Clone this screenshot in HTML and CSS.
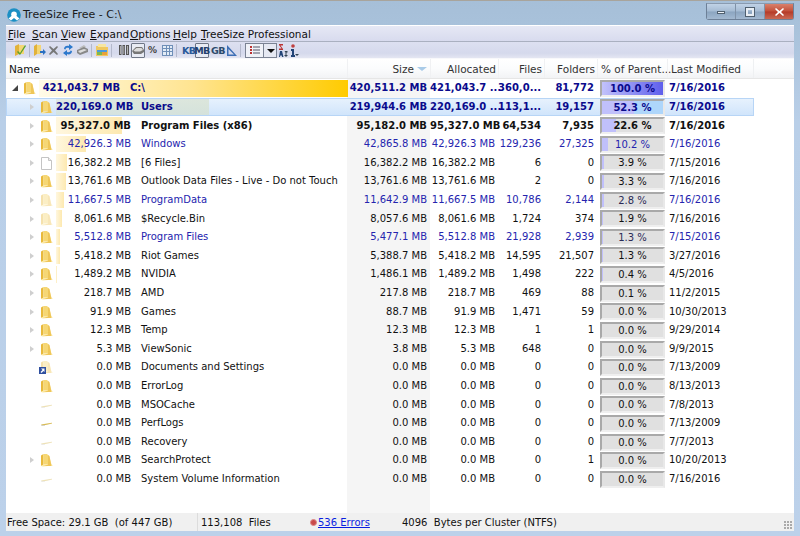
FILE: index.html
```html
<!DOCTYPE html>
<html lang="en">
<head>
<meta charset="utf-8">
<title>TreeSize Free - C:\</title>
<link rel="stylesheet" href="styles.css">
</head>
<body>
<svg class="defs" width="0" height="0" aria-hidden="true">
  <symbol id="folder" viewBox="0 0 13 14">
    <path d="M1 2.5 3.5 1v10.5L1 13z" fill="#e8b93c"/>
    <path d="M3.5 1h3.5l1 1v9.5H3.5z" fill="#f6d774"/>
    <path d="M8 2l1 1 2.5 8.5L13 12.500 3 13.500 1 13l2.500-1.500H8z" fill="#fbe69c"/>
    <path d="M8 2v9.500L4 13h7.500L9.500 3z" fill="#efc659"/>
  </symbol>
  <symbol id="empty" viewBox="0 0 13 14">
    <path d="M1 8.500 7 7.500l5-.8v.8L7 8.800 2 9.500z" fill="#d8bb55"/>
    <path d="M1 9.500h4v.5H1z" fill="#bbb"/>
  </symbol>
</svg>
<div class="window">
  <header class="titlebar">
    <svg class="appicon" width="14" height="14" viewBox="0 0 14 14"><circle cx="7" cy="7" r="6.800" fill="#1b8fc4"/><circle cx="7" cy="6.200" r="2.800" fill="#fff"/><path d="M1.500 10.500 5 7.500l4 0 3.500 3-2.500 2-3-2.500-3 2.500z" fill="#fff"/></svg>
    <span class="apptitle">TreeSize Free - C:\</span>
    <div class="controls">
      <span class="ctl"><i class="ctl-min"></i></span>
      <span class="ctl"><i class="ctl-max"></i></span>
      <span class="ctl ctl-close"><svg width="9" height="8" viewBox="0 0 9 8"><path d="M1 0 4.500 3 8 0l1 1-3 3 3 3-1 1-3.500-3L1 8 0 7l3-3-3-3z" fill="#fff"/></svg></span>
    </div>
  </header>
  <main class="client">
    <nav class="menubar">
      <span class="m1"><u>F</u>ile</span><span class="m2"><u>S</u>can</span><span class="m3"><u>V</u>iew</span><span class="m4"><u>E</u>xpand</span><span class="m5"><u>O</u>ptions</span><span class="m6"><u>H</u>elp</span><span class="m7"><u>T</u>reeSize Professional</span>
    </nav>
    <div class="toolbar">
      <svg class="ti g3" width="11" height="12" viewBox="0 0 11 12"><path d="M0 2l4-2v10l-4 2z" fill="#e2b23a"/><path d="M4 1h5v9H4z" fill="#f4d675"/><path d="M3 7l2 2 5-8 1 1-6 9-3-3z" fill="#5aa02c"/></svg>
      <i class="sep"></i>
      <svg class="ti" width="12" height="12" viewBox="0 0 12 12"><path d="M0 2l3-2v10l-3 2z" fill="#e2b23a"/><path d="M3 1h4v9H3z" fill="#f4d675"/><path d="M6 7h3V5l3 3-3 3V9H6z" fill="#2a6fc0"/></svg>
      <svg class="ti g3" width="9" height="9" viewBox="0 0 9 9"><path d="M0 1l1-1 3.500 3L8 0l1 1-3 3.500L9 8 8 9 4.500 6 1 9 0 8l3-3.500z" fill="#777"/></svg>
      <svg class="ti g5" width="10" height="12" viewBox="0 0 10 12"><path d="M1 5C1 2 4 1 6 2V0l4 3-4 3V4C4 3.500 2.500 4 2.500 5.500z" fill="#2c78cc"/><path d="M9 7c0 3-3 4-5 3v2L0 9l4-3v2c2 .5 3.500 0 3.500-1.500z" fill="#2c78cc"/></svg>
      <svg class="ti g3" width="12" height="10" viewBox="0 0 12 10"><path d="M3 3 8 0l2 2-4 2z" fill="#bbb"/><path d="M1 5l7-3 4 2v3L4 10 1 8z" fill="#888"/><path d="M2 6l6-2 3 1-7 3z" fill="#ddd"/></svg>
      <i class="sep"></i>
      <svg class="ti" width="12" height="12" viewBox="0 0 12 12"><path d="M0 2h4l1 1h7v9H0z" fill="#f0c860"/><path d="M1 6h10v2H1z" fill="#4a9ade"/><path d="M1 8h5v3H1z" fill="#7cb850"/><path d="M6 8h5v3H6z" fill="#e8a03a"/><path d="M2 0h8v3H2z" fill="#f7e6a0"/></svg>
      <i class="sep"></i>
      <svg class="ti g3" width="10" height="10" viewBox="0 0 10 10"><path d="M0 0h2.500v10H0zM3.500 0H6v10H3.500zM7 0h3v10H7z" fill="#555"/><path d="M1 1h.7v8H1zM4.500 1h.7v8h-.7zM8 1h.8v8H8z" fill="#ccc"/></svg>
      <span class="pressed btn-drive"><svg width="12" height="8" viewBox="0 0 12 8"><path d="M0 5l4-4h6l2 3v2l-3 2H2z" fill="#777"/><path d="M1.500 4.500 4.500 2h5l1.500 2-3 1.500H3z" fill="#ddd"/></svg></span>
      <span class="tt-pct">%</span>
      <svg class="ti g4" width="11" height="11" viewBox="0 0 11 11"><path d="M0 0h11v11H0z" fill="#6f8fb8"/><path d="M1 1h3v2H1zM5 1h2v2H5zM8 1h2v2H8zM1 4h3v2H1zM5 4h2v2H5zM8 4h2v2H8zM1 7h3v3H1zM5 7h2v3H5zM8 7h2v3H8z" fill="#e3ecf6"/></svg>
      <i class="sep"></i>
      <span class="tt tt-kb">KB</span>
      <span class="pressed tt tt-mb">MB</span>
      <span class="tt tt-gb">GB</span>
      <svg class="ti g3" width="11" height="11" viewBox="0 0 11 11"><path d="M1 0v11h10zM2.500 4v5.500H8z" fill="#3d6fb5" fill-rule="evenodd"/></svg>
      <i class="sep"></i>
      <span class="combo"><span class="combo-list"><svg width="10" height="8" viewBox="0 0 10 8"><path d="M0 0h2v2H0zM0 3h2v2H0zM0 6h2v2H0z" fill="#b33"/><path d="M3 .5h7v1H3zM3 3.500h7v1H3zM3 6.500h7v1H3z" fill="#556"/></svg></span><span class="combo-arrow"></span></span>
      <svg class="ti g1" width="9" height="13" viewBox="0 0 9 13"><path d="M0 0h4v1.500H1.500L4 5v1H0V4.500h2.500L0 1z" fill="#b33"/><path d="M1 7h2l1.500 6H3l-.3-1.500H1.300L1 13H0z" fill="#247"/><path d="M5.500 7h3v1.500h-1V11H9l-2 2-2-2h1.500V8.500z" fill="#345"/></svg>
      <svg class="ti g3" width="8" height="13" viewBox="0 0 8 13"><circle cx="2" cy="2" r="1.800" fill="#c04040"/><path d="M0 5h3v6h1v2H0v-2h1V7H0z" fill="#247"/><path d="M4 10h4l-2 2z" fill="#345"/></svg>
    </div>
    <div class="header gridrow">
      <div class="hname">Name</div>
      <div class="hcell num hsize">Size <span class="sort"></span></div>
      <div class="hcell num">Allocated</div>
      <div class="hcell num">Files</div>
      <div class="hcell num">Folders</div>
      <div class="hcell hpct">% of Parent...</div>
      <div class="hcell hmod">Last Modified</div>
    </div>
    <div class="tree">
      <div class="gridrow row root navy b">
        <div class="name l0"><i class="exp open"></i><svg class="ic"><use href="#folder"/></svg><div class="sizewrap"><i class="bar barroot" style="width:309px"></i><span class="sz">421,043.7 MB</span><span class="nm">C:\</span></div></div>
        <div class="c">420,511.2 MB</div><div class="c">421,043.7 ...</div><div class="c">360,0...</div><div class="c">81,772</div>
        <div class="pc"><div class="pbox"><i class="fill fillroot" style="width:100%"></i><span>100.0 %</span></div></div><div class="d">7/16/2016</div>
      </div>
      <div class="gridrow row sel navy b">
        <div class="name"><i class="exp"></i><svg class="ic"><use href="#folder"/></svg><div class="sizewrap"><i class="bar barsel" style="width:153px"></i><span class="sz">220,169.0 MB</span><span class="nm">Users</span></div></div>
        <div class="c">219,944.6 MB</div><div class="c">220,169.0 ...</div><div class="c">113,1...</div><div class="c">19,157</div>
        <div class="pc"><div class="pbox pboxsel"><i class="fill" style="width:52.300%"></i><span>52.3 %</span></div></div><div class="d">7/16/2016</div>
      </div>
      <div class="gridrow row b">
        <div class="name"><i class="exp"></i><svg class="ic"><use href="#folder"/></svg><div class="sizewrap"><i class="bar" style="width:66px"></i><span class="sz">95,327.0 MB</span><span class="nm">Program Files (x86)</span></div></div>
        <div class="c">95,182.0 MB</div><div class="c">95,327.0 MB</div><div class="c">64,534</div><div class="c">7,935</div>
        <div class="pc"><div class="pbox"><i class="fill" style="width:22.600%"></i><span>22.6 %</span></div></div><div class="d">7/16/2016</div>
      </div>
      <div class="gridrow row blue">
        <div class="name"><i class="exp"></i><svg class="ic"><use href="#folder"/></svg><div class="sizewrap"><i class="bar" style="width:30px"></i><span class="sz">42,926.3 MB</span><span class="nm">Windows</span></div></div>
        <div class="c">42,865.8 MB</div><div class="c">42,926.3 MB</div><div class="c">129,236</div><div class="c">27,325</div>
        <div class="pc"><div class="pbox"><i class="fill" style="width:10.200%"></i><span>10.2 %</span></div></div><div class="d">7/16/2016</div>
      </div>
      <div class="gridrow row">
        <div class="name"><i class="exp"></i><svg class="ic" viewBox="0 0 13 14"><path d="M1.500 1.500h7l3 3v9h-10z" fill="#fff" stroke="#c4c4c4"/><path d="M8.500 1.500v3h3" fill="#eee" stroke="#c4c4c4"/></svg><div class="sizewrap"><i class="bar" style="width:11px"></i><span class="sz">16,382.2 MB</span><span class="nm">[6 Files]</span></div></div>
        <div class="c">16,382.2 MB</div><div class="c">16,382.2 MB</div><div class="c">6</div><div class="c">0</div>
        <div class="pc"><div class="pbox"><i class="fill" style="width:3.900%"></i><span>3.9 %</span></div></div><div class="d">7/15/2016</div>
      </div>
      <div class="gridrow row">
        <div class="name"><i class="exp"></i><svg class="ic"><use href="#folder"/></svg><div class="sizewrap"><i class="bar" style="width:10px"></i><span class="sz">13,761.6 MB</span><span class="nm">Outlook Data Files - Live - Do not Touch</span></div></div>
        <div class="c">13,761.6 MB</div><div class="c">13,761.6 MB</div><div class="c">2</div><div class="c">0</div>
        <div class="pc"><div class="pbox"><i class="fill" style="width:3.300%"></i><span>3.3 %</span></div></div><div class="d">7/16/2016</div>
      </div>
      <div class="gridrow row blue">
        <div class="name"><i class="exp"></i><svg class="ic faded"><use href="#folder"/></svg><div class="sizewrap"><i class="bar" style="width:8px"></i><span class="sz">11,667.5 MB</span><span class="nm">ProgramData</span></div></div>
        <div class="c">11,642.9 MB</div><div class="c">11,667.5 MB</div><div class="c">10,786</div><div class="c">2,144</div>
        <div class="pc dark"><div class="pbox"><i class="fill" style="width:2.800%"></i><span>2.8 %</span></div></div><div class="d">7/16/2016</div>
      </div>
      <div class="gridrow row">
        <div class="name"><i class="exp"></i><svg class="ic faded"><use href="#folder"/></svg><div class="sizewrap"><i class="bar" style="width:6px"></i><span class="sz">8,061.6 MB</span><span class="nm">$Recycle.Bin</span></div></div>
        <div class="c">8,057.6 MB</div><div class="c">8,061.6 MB</div><div class="c">1,724</div><div class="c">374</div>
        <div class="pc"><div class="pbox"><i class="fill" style="width:1.900%"></i><span>1.9 %</span></div></div><div class="d">7/16/2016</div>
      </div>
      <div class="gridrow row blue">
        <div class="name"><i class="exp"></i><svg class="ic"><use href="#folder"/></svg><div class="sizewrap"><i class="bar" style="width:4px"></i><span class="sz">5,512.8 MB</span><span class="nm">Program Files</span></div></div>
        <div class="c">5,477.1 MB</div><div class="c">5,512.8 MB</div><div class="c">21,928</div><div class="c">2,939</div>
        <div class="pc dark"><div class="pbox"><i class="fill" style="width:1.300%"></i><span>1.3 %</span></div></div><div class="d">7/15/2016</div>
      </div>
      <div class="gridrow row">
        <div class="name"><i class="exp"></i><svg class="ic"><use href="#folder"/></svg><div class="sizewrap"><i class="bar" style="width:4px"></i><span class="sz">5,418.2 MB</span><span class="nm">Riot Games</span></div></div>
        <div class="c">5,388.7 MB</div><div class="c">5,418.2 MB</div><div class="c">14,595</div><div class="c">21,507</div>
        <div class="pc"><div class="pbox"><i class="fill" style="width:1.300%"></i><span>1.3 %</span></div></div><div class="d">3/27/2016</div>
      </div>
      <div class="gridrow row">
        <div class="name"><i class="exp"></i><svg class="ic"><use href="#folder"/></svg><div class="sizewrap"><i class="bar" style="width:1px"></i><span class="sz">1,489.2 MB</span><span class="nm">NVIDIA</span></div></div>
        <div class="c">1,486.1 MB</div><div class="c">1,489.2 MB</div><div class="c">1,498</div><div class="c">222</div>
        <div class="pc"><div class="pbox"><i class="fill" style="width:.4%"></i><span>0.4 %</span></div></div><div class="d">4/5/2016</div>
      </div>
      <div class="gridrow row">
        <div class="name"><i class="exp"></i><svg class="ic"><use href="#folder"/></svg><div class="sizewrap"><span class="sz">218.7 MB</span><span class="nm">AMD</span></div></div>
        <div class="c">217.8 MB</div><div class="c">218.7 MB</div><div class="c">469</div><div class="c">88</div>
        <div class="pc"><div class="pbox"><span>0.1 %</span></div></div><div class="d">11/2/2015</div>
      </div>
      <div class="gridrow row">
        <div class="name"><i class="exp"></i><svg class="ic"><use href="#folder"/></svg><div class="sizewrap"><span class="sz">91.9 MB</span><span class="nm">Games</span></div></div>
        <div class="c">88.7 MB</div><div class="c">91.9 MB</div><div class="c">1,471</div><div class="c">59</div>
        <div class="pc"><div class="pbox"><span>0.0 %</span></div></div><div class="d">10/30/2013</div>
      </div>
      <div class="gridrow row">
        <div class="name"><i class="exp"></i><svg class="ic"><use href="#folder"/></svg><div class="sizewrap"><span class="sz">12.3 MB</span><span class="nm">Temp</span></div></div>
        <div class="c">12.3 MB</div><div class="c">12.3 MB</div><div class="c">1</div><div class="c">1</div>
        <div class="pc"><div class="pbox"><span>0.0 %</span></div></div><div class="d">9/29/2014</div>
      </div>
      <div class="gridrow row">
        <div class="name"><i class="exp"></i><svg class="ic"><use href="#folder"/></svg><div class="sizewrap"><span class="sz">5.3 MB</span><span class="nm">ViewSonic</span></div></div>
        <div class="c">3.8 MB</div><div class="c">5.3 MB</div><div class="c">648</div><div class="c">0</div>
        <div class="pc"><div class="pbox"><span>0.0 %</span></div></div><div class="d">9/9/2015</div>
      </div>
      <div class="gridrow row">
        <div class="name"><i class="noexp"></i><span class="linkic"><svg class="ic faded"><use href="#folder"/></svg><svg class="linkarrow" width="7" height="7" viewBox="0 0 7 7"><path d="M0 0h7v7H0z" fill="#2f4f9f"/><path d="M2 1.500h3.500V5L4.500 4 2.500 6 1.500 5l2-2z" fill="#fff"/></svg></span><div class="sizewrap"><span class="sz">0.0 MB</span><span class="nm">Documents and Settings</span></div></div>
        <div class="c">0.0 MB</div><div class="c">0.0 MB</div><div class="c">0</div><div class="c">0</div>
        <div class="pc"><div class="pbox"><span>0.0 %</span></div></div><div class="d">7/13/2009</div>
      </div>
      <div class="gridrow row">
        <div class="name"><i class="noexp"></i><svg class="ic"><use href="#folder"/></svg><div class="sizewrap"><span class="sz">0.0 MB</span><span class="nm">ErrorLog</span></div></div>
        <div class="c">0.0 MB</div><div class="c">0.0 MB</div><div class="c">0</div><div class="c">0</div>
        <div class="pc"><div class="pbox"><span>0.0 %</span></div></div><div class="d">8/13/2013</div>
      </div>
      <div class="gridrow row">
        <div class="name"><i class="noexp"></i><svg class="ic faded"><use href="#empty"/></svg><div class="sizewrap"><span class="sz">0.0 MB</span><span class="nm">MSOCache</span></div></div>
        <div class="c">0.0 MB</div><div class="c">0.0 MB</div><div class="c">0</div><div class="c">0</div>
        <div class="pc"><div class="pbox"><span>0.0 %</span></div></div><div class="d">7/8/2013</div>
      </div>
      <div class="gridrow row">
        <div class="name"><i class="noexp"></i><svg class="ic"><use href="#empty"/></svg><div class="sizewrap"><span class="sz">0.0 MB</span><span class="nm">PerfLogs</span></div></div>
        <div class="c">0.0 MB</div><div class="c">0.0 MB</div><div class="c">0</div><div class="c">0</div>
        <div class="pc"><div class="pbox"><span>0.0 %</span></div></div><div class="d">7/13/2009</div>
      </div>
      <div class="gridrow row">
        <div class="name"><i class="noexp"></i><svg class="ic faded"><use href="#empty"/></svg><div class="sizewrap"><span class="sz">0.0 MB</span><span class="nm">Recovery</span></div></div>
        <div class="c">0.0 MB</div><div class="c">0.0 MB</div><div class="c">0</div><div class="c">0</div>
        <div class="pc"><div class="pbox"><span>0.0 %</span></div></div><div class="d">7/7/2013</div>
      </div>
      <div class="gridrow row">
        <div class="name"><i class="exp"></i><svg class="ic"><use href="#folder"/></svg><div class="sizewrap"><span class="sz">0.0 MB</span><span class="nm">SearchProtect</span></div></div>
        <div class="c">0.0 MB</div><div class="c">0.0 MB</div><div class="c">0</div><div class="c">1</div>
        <div class="pc"><div class="pbox"><span>0.0 %</span></div></div><div class="d">10/20/2013</div>
      </div>
      <div class="gridrow row">
        <div class="name"><i class="noexp"></i><svg class="ic faded"><use href="#empty"/></svg><div class="sizewrap"><span class="sz">0.0 MB</span><span class="nm">System Volume Information</span></div></div>
        <div class="c">0.0 MB</div><div class="c">0.0 MB</div><div class="c">0</div><div class="c">0</div>
        <div class="pc"><div class="pbox"><span>0.0 %</span></div></div><div class="d">7/16/2016</div>
      </div>
    </div>
    <footer class="status">
      <span class="s1">Free Space: 29.1 GB&nbsp; (of 447 GB)</span>
      <span class="s2">113,108&nbsp; Files</span>
      <span class="s3"><i class="err"></i><a href="#errors">536 Errors</a></span>
      <span class="s4">4096&nbsp; Bytes per Cluster (NTFS)</span>
      <i class="grip"></i>
    </footer>
  </main>
</div>
</body>
</html>
```

FILE: styles.css
```css
* { box-sizing: border-box; }
html, body { margin: 0; padding: 0; }
body { width: 800px; height: 536px; overflow: hidden; font-family: "DejaVu Sans", sans-serif; font-size: 10px; color: #111; }
.defs { position: absolute; }
.window { width: 800px; height: 536px; display: flex; flex-direction: column; background: linear-gradient(#a6bfd8, #a9c2db 30px, #b9cfe8 120px, #bcd1ea); border-top: 1px solid #a8a49c; padding: 0 6px 5px 6px; }
.titlebar { height: 24px; display: flex; align-items: center; flex: none; padding-left: 1px; }
.appicon { flex: none; margin-top: 3px; }
.apptitle { margin-left: 2px; margin-top: 3px; font-size: 11px; color: #1a1a1a; }
.controls { margin-left: auto; margin-top: -3px; display: flex; height: 17px; border: 1px solid #6d8097; border-top-color: #8a9bb0; border-radius: 0 0 3px 3px; width: 88px; }
.ctl { width: 29px; display: flex; align-items: center; justify-content: center; background: linear-gradient(#c0d2e6, #a5bbd3 48%, #8ba5c0 52%, #a3b9d1); border-right: 1px solid #7f92a8; }
.ctl-close { flex: 1; border-right: 0; background: linear-gradient(#d9806b, #c2503a 48%, #b53a27 52%, #c96a55); }
.ctl-min { width: 8px; height: 3px; background: #eef3f8; border: 1px solid #50606f; margin-top: 2px; }
.ctl-max { width: 8px; height: 8px; border: 2px solid #e8eef4; outline: 1px solid #50606f; }
.client { flex: 1; min-height: 0; display: flex; flex-direction: column; background: #fff; border-top: 1px solid #fff; margin-right: 0; }
.menubar { height: 16px; flex: none; background: linear-gradient(#e6e8f5, #d8dbee); border-bottom: 1px solid #aab0c0; display: flex; align-items: center; position: relative; font-size: 10.5px; color: #111; }
.menubar span { margin-left: 2px; }
.m1 { margin-left: 2px; width: 22px; }
.m2 { width: 27px; }
.m3 { width: 27px; }
.m4 { width: 38px; }
.m5 { width: 41px; }
.m6 { width: 26px; }
.toolbar { height: 17px; flex: none; background: linear-gradient(#dde0f1, #d5d9ec 70%, #e4e6f2); border-bottom: 1px solid #f8f8fb; display: flex; align-items: center; padding-left: 6px; }
.ti { flex: none; }
.g1 { margin-left: 1px; }
.g3 { margin-left: 3px; }
.g4 { margin-left: 4px; }
.g5 { margin-left: 5px; }
.sep { width: 1px; height: 13px; background: #b4b9cc; margin: 0 4px 0 3px; flex: none; }
.pressed { display: inline-flex; align-items: center; justify-content: center; height: 15px; background: #e8ebf4; border: 1px solid #6e7686; border-radius: 1px; flex: none; }
.btn-drive { width: 14px; margin-left: 2px; }
.tt { font-weight: 700; font-size: 9.5px; color: #2a5a9a; letter-spacing: -.5px; flex: none; }
.tt-kb { width: 12px; margin-left: 1px; }
.tt-mb { width: 14px; color: #24416f; margin-left: 1px; }
.tt-gb { width: 12px; color: #2b4a6b; margin-left: 2px; }
.tt-pct { font-size: 9px; font-weight: 700; color: #444; margin-left: 3px; width: 10px; flex: none; }
.combo { display: flex; height: 15px; border: 1px solid #7b8394; background: #e6e9f3; width: 32px; margin: 0 1px 0 0; flex: none; }
.combo-list { width: 18px; display: flex; align-items: center; justify-content: center; border-right: 1px solid #7b8394; background: #f0f2f8; }
.combo-arrow { flex: 1; position: relative; }
.combo-arrow::after { content: ""; position: absolute; left: 3px; top: 5px; border: 4px solid transparent; border-top-color: #111; border-bottom-width: 0; }
.gridrow { display: grid; grid-template-columns: 341px 83px 68px 46px 53px 70px 87px; }
.header { height: 20px; flex: none; align-items: center; background: linear-gradient(#fff, #fbfcfd 50%, #f2f3f5); border-bottom: 1px solid #e6e6e6; color: #333; font-size: 10.500px; }
.hname { padding-left: 3px; color: #111; }
.hcell { height: 100%; display: flex; align-items: center; border-left: 1px solid #f0f1f3; }
.num { justify-content: flex-end; padding-right: 2px; }
.hsize { padding-right: 3px; gap: 3px; }
.sort { width: 0; height: 0; border: 5px solid transparent; border-top: 4px solid #a9cbe8; border-bottom: 0; }
.hpct { padding-left: 3px; white-space: nowrap; }
.hmod { padding-left: 3px; border-right: 1px solid #eef0f2; }
.tree { flex: 1; min-height: 0; background: linear-gradient(#f5f5f5, #f5f5f5) 341px 0 / 83px 100% no-repeat #fff; overflow: hidden; }
.row { height: 18.62px; align-items: center; line-height: 18px; white-space: nowrap; width: 748px; }
.b { font-weight: 700; }
.navy { color: #0a0a8c; }
.blue { color: #2424ae; }
.dark .pbox { color: #2a2a55; }
.sel { background: linear-gradient(#e8f2fd, #cfe4fb); outline: 1px solid #b7d5f6; outline-offset: -1px; }
.name { display: flex; align-items: center; height: 100%; padding-left: 24px; min-width: 0; }
.root .name { padding-left: 6px; }
.exp { width: 0; height: 0; flex: none; border: 3px solid transparent; border-left: 4px solid #cfcfcf; border-right: 0; margin-right: 7px; position: relative; }
.exp.open { border: 0; border-bottom: 6px solid #444; border-left: 6px solid transparent; margin-right: 6px; }
.noexp { width: 4px; margin-right: 7px; flex: none; }
.ic { width: 13px; height: 14px; flex: none; margin: 0 1px 0 -1px; }
.faded { opacity: .42; }
.linkic { position: relative; display: flex; flex: none; }
.linkarrow { position: absolute; left: -2px; bottom: 0; }
.sizewrap { position: relative; flex: 1; height: 100%; margin-left: 2px; display: flex; align-items: center; padding: 0; }
.bar { position: absolute; left: 0; top: 1px; bottom: 1px; background: linear-gradient(90deg, #fff7df, #fde9b0); }
.barroot { background: linear-gradient(90deg, #fffbe8, #ffe490 50%, #ffcb00); }
.barsel { background: linear-gradient(90deg, rgba(215,225,205,.55), rgba(215,225,205,.7)); }
.sz { position: relative; width: 75px; text-align: right; flex: none; }
.root .sz { width: 81px; }
.nm { position: relative; margin-left: 10px; }
.c { text-align: right; padding-right: 3px; }
.pc { height: 100%; padding: 1px 0 0 3px; }
.pbox { position: relative; width: 65px; height: 17px; background: #e0e0e0; border: 2px solid; border-color: #a9a9a9 #e8e8e8 #efefef #a9a9a9; text-align: center; line-height: 13px; overflow: hidden; }
.pboxsel { background: #aed6fb; }
.fill { position: absolute; left: 0; top: 0; bottom: 0; background: #c0c0fb; }
.fillroot { background: linear-gradient(90deg, #c2c2fb, #5f5fec); }
.pbox span { position: relative; }
.d { padding-left: 2px; }
.status { height: 18px; flex: none; background: #f0f0f0; display: flex; align-items: center; position: relative; white-space: nowrap; }
.status span { display: flex; align-items: center; height: 100%; }
.s1 { width: 192px; padding-left: 1px; border-right: 1px solid #dcdcdc; }
.s2 { width: 106px; padding-left: 3px; }
.s3 { width: 98px; padding-left: 6px; gap: 1px; }
.err { width: 7px; height: 7px; border-radius: 50%; background: #c94a4a; border: 1px solid #d88; }
.s3 a { color: #0a1ee0; }
.grip { position: absolute; right: 2px; bottom: 2px; width: 8px; height: 8px; background: radial-gradient(circle at 1px 1px, #aaa 1px, transparent 1px) 0 0 / 3px 3px; }
```
